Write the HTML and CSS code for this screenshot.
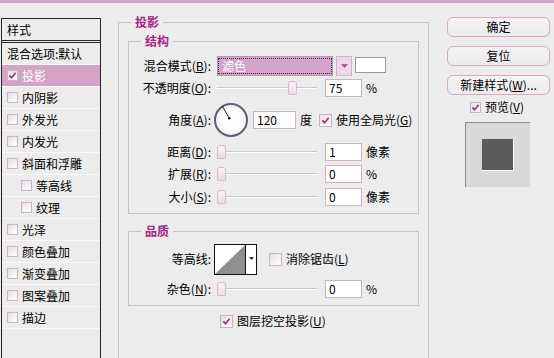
FILE: index.html
```html
<!DOCTYPE html>
<html lang="zh-CN">
  <head>
    <meta charset="UTF-8" />
    <title>图层样式 - 投影</title>
    <link rel="stylesheet" href="styles.css">
  </head>
  <body>
    <div class="topbar"></div>
    <div class="dialog">
      <!-- 左侧样式列表 -->
      <div class="styles">
        <div class="styles-head">样式</div>
        <div class="item">混合选项:默认</div>
        <div class="item on"><span class="cb checked"><svg viewBox="0 0 10 10"><path d="M1.5 5 L4 7.5 L8.5 2" /></svg></span>投影</div>
        <div class="item"><span class="cb"></span>内阴影</div>
        <div class="item"><span class="cb"></span>外发光</div>
        <div class="item"><span class="cb"></span>内发光</div>
        <div class="item"><span class="cb"></span>斜面和浮雕</div>
        <div class="item sub"><span class="cb"></span>等高线</div>
        <div class="item sub"><span class="cb"></span>纹理</div>
        <div class="item"><span class="cb"></span>光泽</div>
        <div class="item"><span class="cb"></span>颜色叠加</div>
        <div class="item"><span class="cb"></span>渐变叠加</div>
        <div class="item"><span class="cb"></span>图案叠加</div>
        <div class="item"><span class="cb"></span>描边</div>
      </div>

      <!-- 投影设置 -->
      <div class="main group">
        <div class="group-title">投影</div>

        <div class="group inner">
          <div class="group-title">结构</div>

          <div class="row first">
            <label class="lbl">混合模式(<u>B</u>):</label>
            <div class="select"><span>滤色</span></div>
            <div class="drop"><svg viewBox="0 0 10 6"><path d="M1 1 L9 1 L5 5 Z" /></svg></div>
            <div class="swatch"></div>
          </div>

          <div class="row">
            <label class="lbl">不透明度(<u>O</u>):</label>
            <div class="slider"><span class="thumb" style="left: 71px"></span></div>
            <div class="num">75</div>
            <span class="unit">%</span>
          </div>

          <div class="row angle">
            <label class="lbl">角度(<u>A</u>):</label>
            <div class="dial">
              <svg viewBox="0 0 34 34">
                <line x1="17" y1="17" x2="9" y2="3" />
                <circle cx="17" cy="17" r="1.5" />
              </svg>
            </div>
            <div class="num wide">120</div>
            <span class="unit">度</span>
            <span class="cb big checked"><svg viewBox="0 0 10 10"><path d="M1.5 5 L4 7.5 L8.5 2" /></svg></span>
            <span class="cb-text">使用全局光(<u>G</u>)</span>
          </div>

          <div class="row gap2">
            <label class="lbl">距离(<u>D</u>):</label>
            <div class="slider"><span class="thumb"></span></div>
            <div class="num">1</div>
            <span class="unit">像素</span>
          </div>

          <div class="row">
            <label class="lbl">扩展(<u>R</u>):</label>
            <div class="slider"><span class="thumb"></span></div>
            <div class="num">0</div>
            <span class="unit">%</span>
          </div>

          <div class="row gap1">
            <label class="lbl">大小(<u>S</u>):</label>
            <div class="slider"><span class="thumb"></span></div>
            <div class="num">0</div>
            <span class="unit">像素</span>
          </div>
        </div>

        <div class="group inner quality">
          <div class="group-title">品质</div>

          <div class="row contour-row">
            <label class="lbl">等高线:</label>
            <div class="contour">
              <svg class="curve" viewBox="0 0 30 29"><path d="M30 0 L30 29 L0 29 Z" /></svg>
              <div class="contour-drop"><svg viewBox="0 0 6 4"><path d="M0 0 L6 0 L3 3 Z" /></svg></div>
            </div>
            <span class="cb big"></span>
            <span class="cb-text">消除锯齿(<u>L</u>)</span>
          </div>

          <div class="row noise">
            <label class="lbl">杂色(<u>N</u>):</label>
            <div class="slider"><span class="thumb"></span></div>
            <div class="num">0</div>
            <span class="unit">%</span>
          </div>
        </div>

        <div class="knockout">
          <span class="cb big checked"><svg viewBox="0 0 10 10"><path d="M1.5 5 L4 7.5 L8.5 2" /></svg></span>
          <span class="cb-text">图层挖空投影(<u>U</u>)</span>
        </div>
      </div>

      <!-- 右侧按钮 -->
      <div class="side">
        <div class="btn">确定</div>
        <div class="btn">复位</div>
        <div class="btn">新建样式(<u>W</u>)...</div>
        <div class="preview-check">
          <span class="cb checked"><svg viewBox="0 0 10 10"><path d="M1.5 5 L4 7.5 L8.5 2" /></svg></span>
          <span class="cb-text">预览(<u>V</u>)</span>
        </div>
        <div class="preview">
          <div class="preview-square"></div>
        </div>
      </div>
    </div>
  </body>
</html>
```

FILE: styles.css
```css
body {
  margin: 0;
  height: 358px;
  overflow: hidden;
  background: #ececec;
  color: #000;
  font-family: "Noto Sans CJK SC", "Liberation Sans", sans-serif;
  font-size: 12px;
  line-height: 14px;
}
u {
  text-decoration: underline;
}
.topbar {
  height: 3px;
  background: #d5a6c6;
}
.dialog {
  display: flex;
  align-items: flex-start;
}

/* 样式列表 */
.styles {
  margin: 15px 0 0 1px;
  width: 98px;
  height: 345px;
  border: 1px solid #262626;
}
.styles-head {
  height: 21px;
  line-height: 21px;
  padding-left: 5px;
  border-bottom: 3px double #2a2a2a;
}
.item {
  display: flex;
  align-items: center;
  height: 21px;
  padding-left: 5px;
  border-bottom: 1px solid #f9f9f9;
}
.item .cb {
  margin-right: 4px;
}
.item.sub {
  padding-left: 19px;
}
.item.on {
  background: #d5a3c7;
  color: #fff;
}

/* 复选框 */
.cb {
  display: inline-flex;
  align-items: center;
  justify-content: center;
  flex: none;
  width: 9px;
  height: 9px;
  border: 1px solid #c9b4c5;
  background: linear-gradient(135deg, #e6dde4, #ffffff);
}
.cb.big {
  width: 11px;
  height: 11px;
}
.cb svg {
  width: 9px;
  height: 9px;
}
.cb path {
  fill: none;
  stroke: #9b3b7e;
  stroke-width: 2;
}
.cb-text {
  margin-left: 4px;
  white-space: nowrap;
}

/* 分组框 */
.group {
  border: 1px solid #c4c4c4;
}
.group-title {
  display: table;
  margin: -8px 0 0 12px;
  padding: 0 4px;
  background: #ececec;
  font-weight: bold;
  color: #a3277f;
}
.main {
  margin: 19px 0 0 17px;
  width: 309px;
  height: 340px;
}
.inner {
  margin: 12px 9px 0 9px;
  padding-bottom: 5px;
}
.quality {
  margin-top: 17px;
}

/* 行 */
.row {
  display: flex;
  align-items: center;
  height: 22px;
}
.row.first {
  margin-top: 7px;
}
.row.angle {
  height: 38px;
  margin-top: 2px;
}
.row.gap2 {
  margin-top: 2px;
}
.row.gap1 {
  margin-top: 1px;
}
.lbl {
  width: 82px;
  margin-right: 6px;
  text-align: right;
  white-space: nowrap;
}
.select {
  width: 114px;
  height: 18px;
  border: 1px solid #b996b0;
  background: #d6a3c8;
  display: flex;
  align-items: center;
}
.select span {
  flex: 1;
  margin: 1px;
  padding-left: 3px;
  height: 14px;
  line-height: 14px;
  color: #fff;
  outline: 1px dotted #4a2a40;
}
.drop {
  width: 14px;
  height: 18px;
  margin-left: 3px;
  border: 1px solid #d3b1c9;
  background: #eed9e7;
  display: flex;
  align-items: center;
  justify-content: center;
}
.drop svg {
  width: 9px;
  height: 6px;
}
.drop path {
  fill: #a2467f;
}
.swatch {
  width: 29px;
  height: 14px;
  margin: -2px 0 0 3px;
  border: 1px solid #9a9a9a;
  background: #fff;
}

/* 滑块 */
.slider {
  position: relative;
  width: 100px;
  height: 2px;
  margin-right: 8px;
  border-top: 1px solid #c7c7c7;
  border-bottom: 1px solid #fff;
  box-sizing: border-box;
}
.thumb {
  position: absolute;
  left: 0;
  top: -7px;
  width: 7px;
  height: 12px;
  border: 1px solid #d9b9cf;
  border-radius: 3px 3px 1px 1px;
  background: linear-gradient(#fbf3f8, #eadbe5);
}
.num {
  width: 32px;
  height: 16px;
  line-height: 16px;
  padding-left: 3px;
  border: 1px solid #c9b3c4;
  background: #fff;
}
.num.wide {
  width: 38px;
  margin-left: 5px;
}
.unit {
  margin-left: 4px;
}
.angle .unit {
  margin-right: 7px;
}

/* 角度盘 */
.dial {
  width: 30px;
  height: 30px;
  margin-left: -3px;
  border: 2px solid #5b6274;
  border-radius: 50%;
  background: radial-gradient(circle, #ffffff 40%, #e3e4ec 100%);
}
.dial svg {
  width: 30px;
  height: 30px;
  display: block;
}
.dial line {
  stroke: #111;
  stroke-width: 1;
  transform: translate(-2px, -2px);
}
.dial circle {
  fill: #111;
  transform: translate(-2px, -2px);
}

/* 等高线 */
.contour-row {
  height: 32px;
  margin-top: 5px;
}
.contour {
  display: flex;
  height: 29px;
  margin: 0 12px 0 -3px;
  border: 1px solid #111;
  background: #fff;
}
.curve {
  width: 30px;
  height: 29px;
  display: block;
}
.curve path {
  fill: #8f8f8f;
}
.contour-drop {
  width: 10px;
  border-left: 1px solid #111;
  display: flex;
  align-items: center;
  justify-content: center;
}
.contour-drop svg {
  width: 5px;
  height: 4px;
}
.contour-drop path {
  fill: #111;
}
.row.noise {
  margin-top: 3px;
}
.knockout {
  display: flex;
  align-items: center;
  height: 14px;
  margin: 8px 0 0 101px;
}

/* 右侧 */
.side {
  margin: 14px 0 0 18px;
  width: 103px;
}
.btn {
  height: 18px;
  line-height: 18px;
  text-align: center;
  border: 1px solid #d4aac7;
  border-radius: 6px;
  background: linear-gradient(#f6f2f5, #ececec);
  margin-bottom: 9px;
  white-space: nowrap;
}
.btn + .btn + .btn {
  margin-bottom: 0;
}
.preview-check {
  display: flex;
  align-items: center;
  height: 12px;
  margin-top: 6px;
  padding-left: 23px;
}
.preview {
  width: 64px;
  height: 64px;
  margin: 9px 0 0 18px;
  border-left: 1px solid #8c8c8c;
  border-top: 1px solid #8c8c8c;
  background: #d8d8d8;
  display: flex;
  align-items: center;
  justify-content: center;
}
.preview-square {
  width: 31px;
  height: 31px;
  background: #5b5b5b;
  border-right: 1px solid #fff;
  border-bottom: 1px solid #fff;
}
```
